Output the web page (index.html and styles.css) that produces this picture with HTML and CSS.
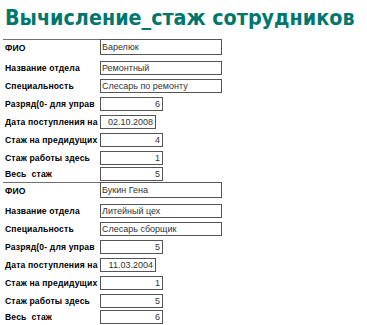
FILE: index.html
```html
<!DOCTYPE html>
<html lang="ru">
<head>
<meta charset="utf-8">
<link rel="stylesheet" href="styles.css">
</head>
<body>
<h1 class="title">Вычисление_стаж сотрудников</h1>
<div class="record">
  <div class="row r0"><span class="label">ФИО</span><span class="box wide">Барелюк</span></div>
  <div class="row r1"><span class="label">Название отдела</span><span class="box wide">Ремонтный</span></div>
  <div class="row r2"><span class="label">Специальность</span><span class="box wide">Слесарь по ремонту</span></div>
  <div class="row r3"><span class="label">Разряд(0- для управ</span><span class="box num">6</span></div>
  <div class="row r4"><span class="label">Дата поступления на</span><span class="box date">02.10.2008</span></div>
  <div class="row r5"><span class="label">Стаж на предидущих</span><span class="box num">4</span></div>
  <div class="row r6"><span class="label">Стаж работы здесь</span><span class="box num">1</span></div>
  <div class="row r7"><span class="label">Весь&nbsp; стаж</span><span class="box num">5</span></div>
</div>
<div class="record">
  <div class="row r0"><span class="label">ФИО</span><span class="box wide">Букин Гена</span></div>
  <div class="row r1"><span class="label">Название отдела</span><span class="box wide">Литейный цех</span></div>
  <div class="row r2"><span class="label">Специальность</span><span class="box wide">Слесарь сборщик</span></div>
  <div class="row r3"><span class="label">Разряд(0- для управ</span><span class="box num">5</span></div>
  <div class="row r4"><span class="label">Дата поступления на</span><span class="box date">11.03.2004</span></div>
  <div class="row r5"><span class="label">Стаж на предидущих</span><span class="box num">1</span></div>
  <div class="row r6"><span class="label">Стаж работы здесь</span><span class="box num">5</span></div>
  <div class="row r7"><span class="label">Весь&nbsp; стаж</span><span class="box num">6</span></div>
</div>
</body>
</html>
```

FILE: styles.css
```css
html, body {
  margin: 0;
  padding: 0;
  background: #ffffff;
}
.title {
  margin: 0;
  height: 39px;
  padding: 5px 0 0 5px;
  box-sizing: border-box;
  font-family: "DejaVu Sans", sans-serif;
  font-stretch: condensed;
  font-weight: bold;
  font-size: 21.3px;
  line-height: 25px;
  color: #00776d;
  white-space: nowrap;
}
.record {
  margin-left: 3px;
  width: 219px;
  border-top: 1px solid #707070;
  display: grid;
  grid-template-rows: 18px 19px 18px 18px 18px 18px 17px 16px;
}
.row {
  display: flex;
  align-items: center;
}
.row.r0 {
  align-items: flex-start;
}
.label {
  width: 97px;
  padding-left: 2px;
  box-sizing: border-box;
  font-family: "Liberation Sans", Arial, sans-serif;
  font-weight: bold;
  font-size: 8.6px;
  color: #000;
  white-space: nowrap;
  letter-spacing: 0.15px;
}
.r0 .label {
  padding-top: 3px;
}
.box {
  box-sizing: border-box;
  height: 14px;
  border: 1px solid #555;
  font-family: "Liberation Sans", Arial, sans-serif;
  font-size: 9px;
  line-height: 12px;
  color: #333;
  padding: 0 2px 0 1px;
  white-space: nowrap;
  overflow: hidden;
}
.r0 .box {
  margin-top: -1px;
  height: 16px;
  line-height: 14px;
}
.wide {
  width: 122px;
}
.num {
  width: 63px;
  text-align: right;
}
.date {
  width: 56px;
  text-align: right;
}
```
